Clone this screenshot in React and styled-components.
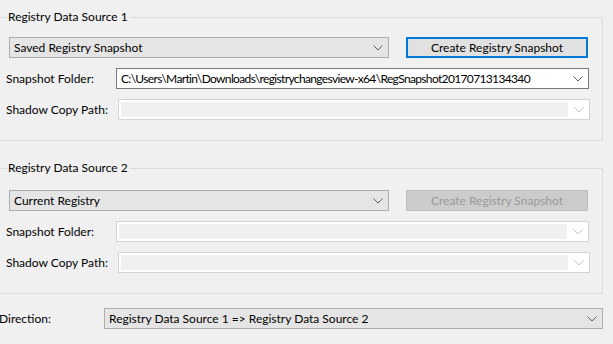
import styled, { createGlobalStyle } from 'styled-components';

const GlobalStyle = createGlobalStyle`
  html, body {
    margin: 0;
    padding: 0;
    background: #f0f0f0;
    overflow: hidden;
  }
  body {
    font-family: Lato, "Noto Sans", sans-serif;
    font-size: 12px;
    color: #000;
  }
`;

const Chevron = ({ disabled }) => (
  <svg width="10" height="6" viewBox="0 0 10 6">
    <path
      d="M0.5 0.5 L5 5 L9.5 0.5"
      fill="none"
      stroke={disabled ? '#c4c4c4' : '#5f5f5f'}
      strokeWidth="1"
    />
  </svg>
);

const App = () => {
  return (
    <Window>
      <GlobalStyle />
      <Group>
        <Legend>Registry Data Source 1</Legend>
        <TopRow>
          <DropList>
            <Text>Saved Registry Snapshot</Text>
            <Chevron />
          </DropList>
          <Button $focused>Create Registry Snapshot</Button>
        </TopRow>
        <Row>
          <Label>Snapshot Folder:</Label>
          <EditCombo>
            <Text $tight>C:\Users\Martin\Downloads\registrychangesview-x64\RegSnapshot20170713134340</Text>
            <Chevron />
          </EditCombo>
        </Row>
        <Row>
          <Label>Shadow Copy Path:</Label>
          <EditCombo $disabled $shift>
            <Field />
            <Chevron disabled />
          </EditCombo>
        </Row>
      </Group>

      <Group $second>
        <Legend $second>Registry Data Source 2</Legend>
        <TopRow>
          <DropList>
            <Text>Current Registry</Text>
            <Chevron />
          </DropList>
          <Button disabled>Create Registry Snapshot</Button>
        </TopRow>
        <Row>
          <Label>Snapshot Folder:</Label>
          <EditCombo $disabled>
            <Field />
            <Chevron disabled />
          </EditCombo>
        </Row>
        <Row>
          <Label>Shadow Copy Path:</Label>
          <EditCombo $disabled $shift>
            <Field />
            <Chevron disabled />
          </EditCombo>
        </Row>
      </Group>

      <DirectionRow>
        <DirLabel>Direction:</DirLabel>
        <DropList $full>
          <Text>Registry Data Source 1 =&gt; Registry Data Source 2</Text>
          <Chevron />
        </DropList>
      </DirectionRow>
    </Window>
  );
};

export default App;

const Window = styled.div`
  width: 613px;
  height: 344px;
  padding-top: 9px;
  box-sizing: border-box;
`;

const Group = styled.fieldset`
  margin: ${(p) => (p.$second ? '19px' : '0')} 10px 0 -3px;
  padding: 0 13px 20px 8px;
  border: 1px solid #dcdcdc;
  border-radius: 0;
  min-width: 0;
  display: flex;
  flex-direction: column;
  gap: 10px;
`;

const Legend = styled.legend`
  margin-left: 1px;
  padding: 0 2px 0 1px;
  line-height: 16px;
  height: 16px;
  margin-bottom: ${(p) => (p.$second ? '14px' : '12px')};
  color: #000;
`;

const TopRow = styled.div`
  display: flex;
  align-items: center;
  gap: 17px;
  padding-left: 3px;
  height: 21px;
`;

const Row = styled.div`
  display: flex;
  align-items: center;
  height: 21px;
`;

const Label = styled.div`
  width: 110px;
  flex: none;
  white-space: nowrap;
`;

const Text = styled.span`
  flex: 1;
  min-width: 0;
  overflow: hidden;
  white-space: nowrap;
  letter-spacing: ${(p) => (p.$tight ? '-0.65px' : 'normal')};
`;

const DropList = styled.div`
  box-sizing: border-box;
  width: ${(p) => (p.$full ? '499px' : '380px')};
  height: 21px;
  flex: none;
  display: flex;
  align-items: center;
  gap: 6px;
  padding: 0 5px 0 4px;
  background: #e5e5e5;
  border: 1px solid #adadad;
`;

const Button = styled.button`
  box-sizing: border-box;
  width: 182px;
  height: 21px;
  flex: none;
  margin: 0;
  padding: 0;
  font: inherit;
  color: #000;
  background: #e1e1e1;
  border: ${(p) => (p.$focused ? '2px solid #0078d7' : '1px solid #adadad')};

  &:disabled {
    color: #9a9a9a;
    background: #cccccc;
    border: 1px solid #bfbfbf;
  }
`;

const EditCombo = styled.div`
  box-sizing: border-box;
  flex: none;
  width: ${(p) => (p.$shift ? '472px' : '473px')};
  margin-left: ${(p) => (p.$shift ? '2px' : '0')};
  height: 21px;
  display: flex;
  align-items: center;
  gap: 6px;
  padding: ${(p) => (p.$disabled ? '2px 5px 2px 2px' : '0 5px 0 4px')};
  background: #fff;
  border: 1px solid ${(p) => (p.$disabled ? '#d4d4d4' : '#7a7a7a')};
`;

const Field = styled.div`
  flex: 1;
  align-self: stretch;
  background: #f0f0f0;
`;

const DirectionRow = styled.div`
  display: flex;
  align-items: center;
  margin-top: 14px;
  height: 21px;
`;

const DirLabel = styled.div`
  width: 105px;
  margin-left: -1px;
  flex: none;
`;
